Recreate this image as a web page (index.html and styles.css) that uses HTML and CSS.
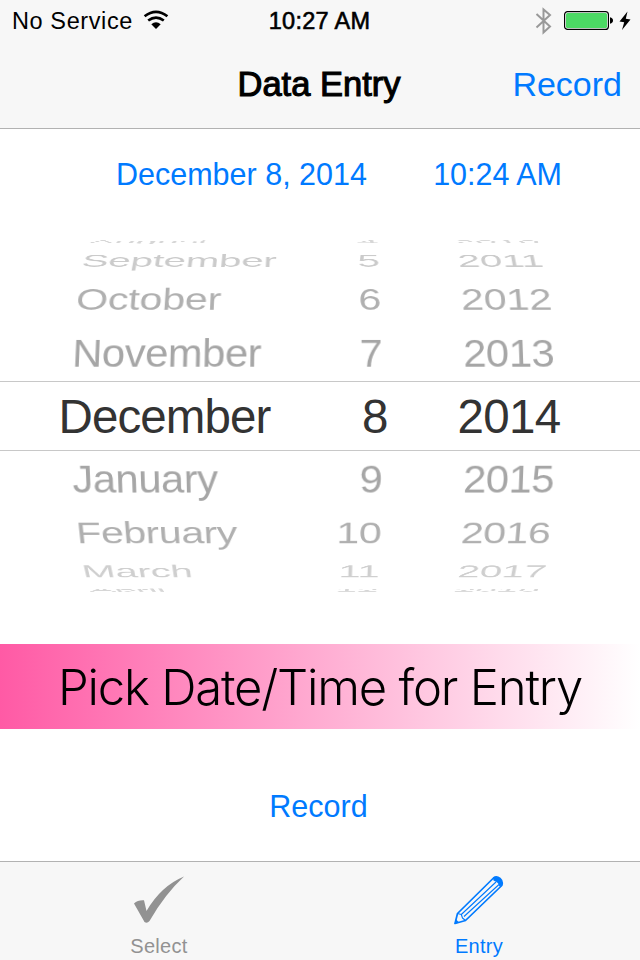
FILE: index.html
```html
<!DOCTYPE html>
<html lang="en">
<head>
<meta charset="utf-8">
<title>Data Entry</title>
<link rel="stylesheet" href="styles.css">
</head>
<body>
<div class="screen">
  <header class="header">
    <div class="status">
      <div class="status-left">
        <span class="carrier">No Service</span>
        <svg class="wifi" width="26" height="20" viewBox="0 0 26 20">
          <g fill="none" stroke="#000" stroke-width="2.7">
            <path d="M1.6 6.2Q13 -2.6 24.4 6.2"/>
            <path d="M5.2 10.5Q13 4.7 20.8 10.5"/>
          </g>
          <path d="M8.3 14.2Q13 10.4 17.7 14.2L13 19Z"/>
        </svg>
      </div>
      <span class="clock">10:27 AM</span>
      <div class="status-right">
        <svg class="bluetooth" width="17" height="28" viewBox="0 0 17 28">
          <path d="M1.5 7L15 19.5L8.5 25.5V2.5L15 8L1.5 20.5" fill="none" stroke="#999" stroke-width="2"/>
        </svg>
        <svg class="battery" width="50" height="20" viewBox="0 0 50 20">
          <rect x=".6" y=".6" width="43.8" height="17.8" rx="3" fill="#fff" stroke="#000" stroke-width="1.2"/>
          <rect x="2" y="2" width="41" height="15" rx="1.5" fill="#4cd964"/>
          <path d="M46 6.3Q49 7 49 9.5T46 12.7Z"/>
        </svg>
        <svg class="bolt" width="12" height="20" viewBox="0 0 12 20">
          <path d="M8.5 .5L.5 10.5L5.2 11.3L3 19L11.5 8.5L6.8 7.8Z"/>
        </svg>
      </div>
    </div>
    <div class="navbar">
      <h1 class="title">Data Entry</h1>
      <a class="nav-action">Record</a>
    </div>
  </header>

  <main class="content">
    <div class="chosen">
      <span class="chosen-date">December 8, 2014</span>
      <span class="chosen-time">10:24 AM</span>
    </div>

    <div class="picker">
      <div class="row up4"><span>August</span><span class="day">4</span><span class="year">2010</span></div>
      <div class="row up3"><span>September</span><span class="day">5</span><span class="year">2011</span></div>
      <div class="row up2"><span>October</span><span class="day">6</span><span class="year">2012</span></div>
      <div class="row up1"><span>November</span><span class="day">7</span><span class="year">2013</span></div>
      <div class="row selected"><span>December</span><span class="day">8</span><span class="year">2014</span></div>
      <div class="row down1"><span>January</span><span class="day">9</span><span class="year">2015</span></div>
      <div class="row down2"><span>February</span><span class="day">10</span><span class="year">2016</span></div>
      <div class="row down3"><span>March</span><span class="day">11</span><span class="year">2017</span></div>
      <div class="row down4"><span>April</span><span class="day">12</span><span class="year">2018</span></div>
    </div>

    <div class="banner"><span class="banner-text">Pick Date/Time for Entry</span></div>
    <a class="record">Record</a>
  </main>

  <nav class="tabs">
    <a class="tab">
      <svg width="52" height="50" viewBox="0 0 52 50">
        <path d="M1 27.5Q5 23.8 11 24.3L13.5 35Q28 10 51 .5Q32 18 16.5 45Q14 48 11.5 46Z" fill="#929292"/>
      </svg>
      <span>Select</span>
    </a>
    <a class="tab active">
      <svg width="52" height="50" viewBox="0 0 52 50">
        <g fill="none" stroke="#007aff" stroke-width="1.7" stroke-linejoin="round">
          <path d="M2 47.5L4.5 37.5L40.5 2Q43.5 -.3 47 2.5Q50.3 5.5 48.8 9.5L12.5 44.5Z"/>
          <path d="M4.5 37.5L8.3 38.5L9.5 42L12.5 44.5M8.3 38.5L43 6M11 40.5L46 8.5" stroke-width="1.1"/>
        </g>
        <path d="M40 2Q43 -.3 47 2.5Q50.5 6 48.5 9.5L46.3 10.5Q46.2 6.7 40.5 4.5ZM1.5 48L2.9 43.3L6.2 46.5Z" fill="#007aff"/>
      </svg>
      <span>Entry</span>
    </a>
  </nav>
</div>
</body>
</html>
```
FILE: styles.css
```css
* { box-sizing: border-box; }

body {
  margin: 0;
  background: #fff;
  font-family: "Liberation Sans", Arial, sans-serif;
  color: #000;
}

.screen {
  width: 640px;
  height: 960px;
  overflow: hidden;
  display: flex;
  flex-direction: column;
}

.header {
  height: 129px;
  background: #f7f7f7;
  border-bottom: 1px solid #b2b2b2;
}

.status {
  height: 40px;
  display: grid;
  grid-template-columns: 1fr auto 1fr;
  align-items: center;
  padding: 2px 9px 0 12px;
  font-size: 23.5px;
}

.status-left, .status-right { display: flex; align-items: center; }
.status-right { justify-content: flex-end; }
.carrier { letter-spacing: 0.6px; }
.wifi { margin: -3px 0 0 10px; }
.clock { margin-right: 4px; letter-spacing: 0.3px; -webkit-text-stroke: 0.6px #000; }
.bluetooth { margin-right: 12px; }
.battery { margin-right: 5px; }

.navbar {
  height: 88px;
  display: grid;
  grid-template-columns: 1fr auto 1fr;
  align-items: center;
  padding: 0 18px 0;
}

.title {
  grid-column: 2;
  margin: 1px 2px 0 0;
  font-size: 34.5px;
  font-weight: 400;
  -webkit-text-stroke: 1.1px #000;
}

.nav-action { justify-self: end; font-size: 34px; color: #007aff; }

.content { flex: 1; display: flex; flex-direction: column; }

.chosen {
  height: 111px;
  display: flex;
  justify-content: space-between;
  padding: 28px 78px 0 116px;
  font-size: 30.5px;
  color: #007aff;
}

/* Drum of rows, all sharing one grid cell and tilted around it */
.picker {
  height: 352px;
  overflow: hidden;
  display: grid;
  align-items: center;
}

.row {
  grid-area: 1 / 1;
  height: 70px;
  display: grid;
  grid-template-columns: 230.5px 81px 1fr;
  align-items: center;
  padding-left: 71px;
  font-size: 42px;
  line-height: 70px;
  letter-spacing: -0.5px;
  color: #a6a6a6;
}

.day { text-align: right; }
.year { padding-left: 81.5px; }

.up1 { transform: perspective(2000px) translate3d(0, -62.6px, -11px) rotateX(20deg); }
.up2 { transform: perspective(2000px) translate3d(0, -118.8px, -43px) rotateX(40deg); letter-spacing: -0.2px; color: #b0b0b0; }
.up3 { transform: perspective(2000px) translate3d(0, -162.2px, -92px) rotateX(60deg); letter-spacing: -0.2px; color: #cbcbcb; }
.up4 { transform: perspective(2000px) translate3d(0, -187.5px, -153px) rotateX(79deg); letter-spacing: -0.3px; color: #d6d6d6; }
.down1 { transform: perspective(2000px) translate3d(0, 64px, -11px) rotateX(-20deg); }
.down2 { transform: perspective(2000px) translate3d(0, 119.9px, -43px) rotateX(-40deg); color: #b0b0b0; }
.down3 { transform: perspective(2000px) translate3d(0, 162.8px, -92px) rotateX(-60deg); letter-spacing: -0.2px; color: #cfcfcf; }
.down4 { transform: perspective(2000px) translate3d(0, 187.5px, -153px) rotateX(-79deg); letter-spacing: -0.3px; color: #d6d6d6; }

.selected {
  grid-template-columns: 248px 81px 1fr;
  padding-left: 58.5px;
  border-top: 1px solid #c8c8c8;
  border-bottom: 1px solid #c8c8c8;
  font-size: 47.5px;
  line-height: 70px;
  letter-spacing: -0.9px;
  color: #333;
}
.selected .year { padding-left: 70px; letter-spacing: -0.7px; }

.banner {
  height: 85px;
  margin-top: 52px;
  padding-top: 2px;
  display: flex;
  align-items: center;
  justify-content: center;
  background: linear-gradient(90deg, #ff5aa5, #fff);
}

.banner-text {
  font-family: Inter, Roboto, sans-serif;
  font-weight: 300;
  font-size: 49px;
  letter-spacing: -1.2px;
  white-space: nowrap;
}

.record {
  margin-top: 60px;
  padding-right: 3px;
  text-align: center;
  font-size: 30.5px;
  color: #007aff;
}

.tabs {
  height: 99px;
  display: flex;
  justify-content: space-between;
  padding: 14px 107px 0 105px;
  background: #f7f7f7;
  border-top: 1px solid #b2b2b2;
}

.tab {
  width: 108px;
  display: flex;
  flex-direction: column;
  align-items: center;
  gap: 9px;
  font-size: 20px;
  line-height: 23px;
  letter-spacing: 0.3px;
  color: #929292;
}
.active { color: #007aff; }
```
